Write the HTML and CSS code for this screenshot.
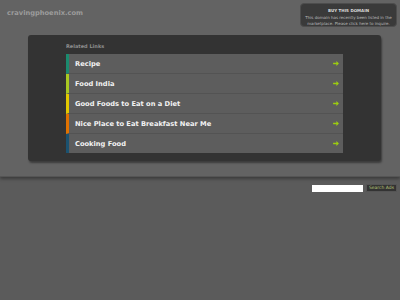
FILE: index.html
```html
<!DOCTYPE html>
<html lang="en">
<head>
    <meta charset="UTF-8">
    <title>cravingphoenix.com</title>
    <link rel="stylesheet" href="styles.css">
</head>
<body>

<div class="top">
    <div class="header">
        <div class="domain">cravingphoenix.com</div>
        <div class="buy-box">
            <div class="buy-title">BUY THIS DOMAIN</div>
            <div class="buy-text">This domain has recently been listed in the marketplace. Please click here to inquire.</div>
        </div>
    </div>

    <div class="panel">
        <div class="related">Related Links</div>
        <ul class="links">
            <li class="c1"><a href="#">Recipe</a><svg class="arrow" viewBox="0 0 7 6"><path d="M0 2h4V0l3 3-3 3V4H0z"/></svg></li>
            <li class="c2"><a href="#">Food India</a><svg class="arrow" viewBox="0 0 7 6"><path d="M0 2h4V0l3 3-3 3V4H0z"/></svg></li>
            <li class="c3"><a href="#">Good Foods to Eat on a Diet</a><svg class="arrow" viewBox="0 0 7 6"><path d="M0 2h4V0l3 3-3 3V4H0z"/></svg></li>
            <li class="c4"><a href="#">Nice Place to Eat Breakfast Near Me</a><svg class="arrow" viewBox="0 0 7 6"><path d="M0 2h4V0l3 3-3 3V4H0z"/></svg></li>
            <li class="c5"><a href="#">Cooking Food</a><svg class="arrow" viewBox="0 0 7 6"><path d="M0 2h4V0l3 3-3 3V4H0z"/></svg></li>
        </ul>
    </div>
</div>

<div class="search">
    <input type="text" class="search-input">
    <button type="button" class="search-btn">Search Ads</button>
</div>

</body>
</html>
```

FILE: styles.css
```css
/* general */
body {
    margin: 0;
    padding: 0;
    font-family: 'DejaVu Sans', sans-serif;
    background-color: #5b5b5b;
    height: 300px;
    overflow: hidden;
}

.top {
    background-color: #636363;
    height: 176px;
    box-shadow: 0 2px 3px rgba(0, 0, 0, 0.35);
    border-bottom: 1px solid #555;
}

.header {
    display: flex;
    justify-content: space-between;
    align-items: flex-start;
    height: 35px;
}

.domain {
    color: #9c9c9c;
    font-size: 6.7px;
    font-weight: bold;
    padding: 9px 0 0 7px;
}

.buy-box {
    width: 91px;
    height: 20px;
    margin: 3px 3px 0 0;
    padding: 2px 2px 0;
    background-color: #3a3a3a;
    border: 1px solid #4d4d4d;
    border-radius: 4px;
    text-align: center;
    color: #bbb;
    line-height: 6px;
}

.buy-title {
    font-size: 4px;
    font-weight: bold;
    color: #ddd;
    margin: 2px 0 1px;
}

.buy-text {
    font-size: 4px;
}

.panel {
    margin: 0 19px 0 28px;
    height: 126px;
    background-color: #333;
    border-radius: 3px;
    box-shadow: 1px 2px 2px rgba(0, 0, 0, 0.4);
    padding: 0 38px 0 38px;
    box-sizing: border-box;
}

.related {
    color: #8e8e8e;
    font-size: 5px;
    font-weight: bold;
    padding-top: 8px;
    height: 11px;
}

.links {
    list-style: none;
    margin: 0;
    padding: 0;
    background-color: #5d5d5d;
}

.links li {
    display: flex;
    justify-content: space-between;
    align-items: center;
    height: 19px;
    border-left: 3px solid #1b8a6e;
    border-bottom: 1px solid #535353;
    padding: 0 4px 0 6px;
}

.links li:last-child {
    border-bottom: none;
}

.links .c2 { border-left-color: #a9c822; }
.links .c3 { border-left-color: #e2c800; }
.links .c4 { border-left-color: #e07200; }
.links .c5 { border-left-color: #1b5270; }

.links a {
    color: #f2f2f2;
    text-decoration: none;
    font-size: 6.7px;
    font-weight: bold;
}

.arrow {
    width: 6px;
    height: 5px;
    fill: #9ccc10;
}

.search {
    display: flex;
    justify-content: flex-end;
    align-items: center;
    gap: 3px;
    padding: 7px 3px 0 0;
}

.search-input {
    width: 51px;
    height: 7px;
    padding: 0;
    border: none;
    background-color: #fff;
}

.search-btn {
    height: 8px;
    padding: 0 2px;
    border: 1px solid #555;
    background-color: #333;
    color: #b7c47a;
    font-family: 'DejaVu Sans', sans-serif;
    font-size: 4.5px;
    line-height: 6px;
}
```
